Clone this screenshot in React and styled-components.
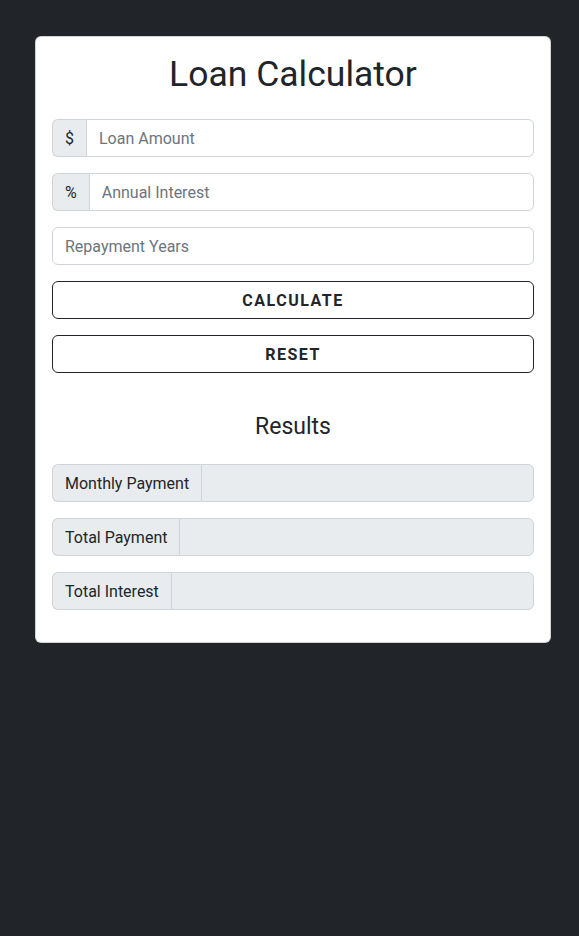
import React from "react";
import styled, { createGlobalStyle } from "styled-components";

const GlobalStyle = createGlobalStyle`
  html, body {
    margin: 0;
    background: #212529;
    font-family: Roboto, "Liberation Sans", sans-serif;
    color: #212529;
  }
  * {
    box-sizing: border-box;
  }
`;

function App() {
  return (
    <Page>
      <GlobalStyle />
      <Card>
        <CardBody>
          <Title>Loan Calculator</Title>
          <InputGroup>
            <Addon>$</Addon>
            <Field type="number" placeholder="Loan Amount" />
          </InputGroup>
          <InputGroup>
            <Addon>%</Addon>
            <Field type="number" placeholder="Annual Interest" />
          </InputGroup>
          <InputGroup>
            <Field type="number" placeholder="Repayment Years" />
          </InputGroup>
          <Button>Calculate</Button>
          <Button>Reset</Button>
          <Results>
            <SubTitle>Results</SubTitle>
            <InputGroup>
              <Addon>Monthly Payment</Addon>
              <Field disabled />
            </InputGroup>
            <InputGroup>
              <Addon>Total Payment</Addon>
              <Field disabled />
            </InputGroup>
            <InputGroup>
              <Addon>Total Interest</Addon>
              <Field disabled />
            </InputGroup>
          </Results>
        </CardBody>
      </Card>
    </Page>
  );
}

const Page = styled.div`
  min-height: 936px;
  padding: 36px 0 0 35px;
`;

const Card = styled.div`
  width: 516px;
  background: #fff;
  border: 1px solid rgba(0, 0, 0, 0.175);
  border-radius: 6px;
`;

const CardBody = styled.div`
  padding: 16px;
`;

const Title = styled.h1`
  margin: 0 0 24px;
  font-size: 35.5px;
  font-weight: 400;
  line-height: 42px;
  text-align: center;
`;

const InputGroup = styled.div`
  display: flex;
  height: 38px;
  margin-bottom: 16px;
`;

const Addon = styled.span`
  display: flex;
  align-items: center;
  padding: 0 12px;
  font-size: 16px;
  background: #e9ecef;
  border: 1px solid #ced4da;
  border-right: none;
  border-radius: 6px 0 0 6px;
  white-space: nowrap;

  & + input {
    border-radius: 0 6px 6px 0;
  }
`;

const Field = styled.input`
  flex: 1;
  min-width: 0;
  padding: 0 12px;
  font: inherit;
  font-size: 16px;
  color: #212529;
  background: #fff;
  border: 1px solid #ced4da;
  border-radius: 6px;
  outline: none;

  &::placeholder {
    color: #6c757d;
  }

  &:disabled {
    background: #e9ecef;
  }
`;

const Button = styled.button`
  display: block;
  width: 100%;
  height: 38px;
  margin-bottom: 16px;
  font-family: inherit;
  font-size: 16px;
  font-weight: 700;
  letter-spacing: 1.5px;
  text-transform: uppercase;
  color: #212529;
  background: transparent;
  border: 1px solid #212529;
  border-radius: 6px;
  cursor: pointer;
`;

const Results = styled.div`
  padding-top: 24px;
`;

const SubTitle = styled.h3`
  margin: 0 0 23px;
  font-size: 23px;
  font-weight: 400;
  line-height: 28px;
  text-align: center;
`;

export default App;
